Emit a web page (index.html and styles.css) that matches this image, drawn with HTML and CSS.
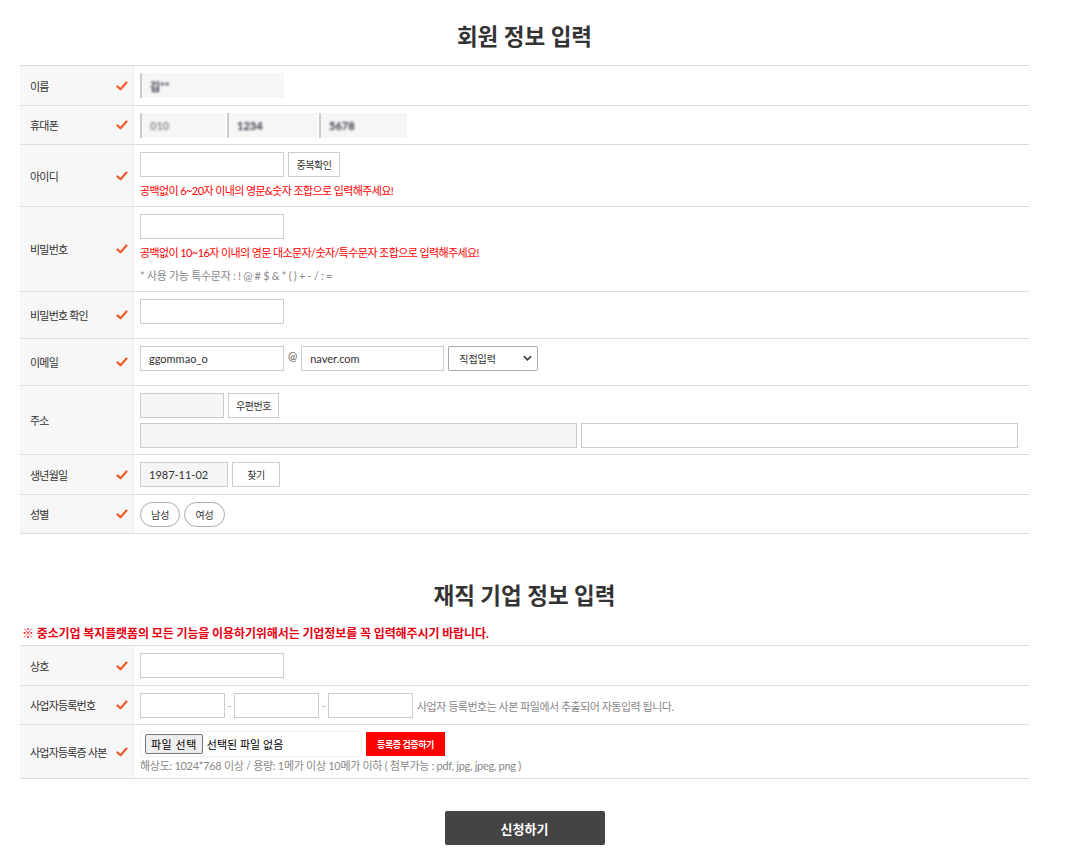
FILE: index.html
```html
<!DOCTYPE html>
<html lang="ko">

<head>
    <meta charset="UTF-8">
    <meta name="viewport" content="width=device-width, initial-scale=1.0">
    <title>회원 정보 입력</title>
    <link rel="stylesheet" href="styles.css">
</head>

<body>
    <div class="wrap">
        <h2 class="sec-title">회원 정보 입력</h2>
        <div class="form-table">
            <div class="row">
                <div class="th">이름<svg class="chk" viewBox="0 0 12 10"><path d="M1.5 5.5 L4.5 8.3 L10.5 1.5"/></svg></div>
                <div class="td line">
                    <span class="blur-box w144"><span class="blur-text dark">김**</span></span>
                </div>
            </div>
            <div class="row">
                <div class="th">휴대폰<svg class="chk" viewBox="0 0 12 10"><path d="M1.5 5.5 L4.5 8.3 L10.5 1.5"/></svg></div>
                <div class="td line phone pb6">
                    <span class="blur-box w85"><span class="blur-text">010</span></span>
                    <span class="blur-box w90"><span class="blur-text dark">1234</span></span>
                    <span class="blur-box w88"><span class="blur-text dark">5678</span></span>
                </div>
            </div>
            <div class="row">
                <div class="th">아이디<svg class="chk" viewBox="0 0 12 10"><path d="M1.5 5.5 L4.5 8.3 L10.5 1.5"/></svg></div>
                <div class="td">
                    <div class="line">
                        <input type="text" class="inp w144">
                        <button type="button" class="btn w52">중복확인</button>
                    </div>
                    <p class="msg red">공백없이 6~20자 이내의 영문&amp;숫자 조합으로 입력해주세요!</p>
                </div>
            </div>
            <div class="row">
                <div class="th">비밀번호<svg class="chk" viewBox="0 0 12 10"><path d="M1.5 5.5 L4.5 8.3 L10.5 1.5"/></svg></div>
                <div class="td">
                    <input type="password" class="inp w144">
                    <p class="msg red">공백없이 10~16자 이내의 영문 대소문자/숫자/특수문자 조합으로 입력해주세요!</p>
                    <p class="msg gray note">* 사용 가능 특수문자 : ! @ # $ &amp; * ( ) + - / : =</p>
                </div>
            </div>
            <div class="row">
                <div class="th">비밀번호 확인<svg class="chk" viewBox="0 0 12 10"><path d="M1.5 5.5 L4.5 8.3 L10.5 1.5"/></svg></div>
                <div class="td pb14">
                    <input type="password" class="inp w144">
                </div>
            </div>
            <div class="row">
                <div class="th">이메일<svg class="chk" viewBox="0 0 12 10"><path d="M1.5 5.5 L4.5 8.3 L10.5 1.5"/></svg></div>
                <div class="td pb14">
                    <div class="line">
                        <input type="text" class="inp w144" value="ggommao_o">
                        <span class="at">@</span>
                        <input type="text" class="inp w143" value="naver.com">
                        <span class="sel-wrap">
                            <select class="sel">
                                <option>직접입력</option>
                                <option>naver.com</option>
                                <option>gmail.com</option>
                            </select>
                            <svg class="sel-arrow" viewBox="0 0 10 6"><path d="M1 1 L5 5 L9 1"/></svg>
                        </span>
                    </div>
                </div>
            </div>
            <div class="row">
                <div class="th">주소</div>
                <div class="td pb6">
                    <div class="line">
                        <input type="text" class="inp w84 ro" readonly>
                        <button type="button" class="btn w51">우편번호</button>
                    </div>
                    <div class="line mt5">
                        <input type="text" class="inp w437 ro" readonly>
                        <input type="text" class="inp w437">
                    </div>
                </div>
            </div>
            <div class="row">
                <div class="th">생년월일<svg class="chk" viewBox="0 0 12 10"><path d="M1.5 5.5 L4.5 8.3 L10.5 1.5"/></svg></div>
                <div class="td">
                    <div class="line">
                        <input type="text" class="inp w88 ro" value="1987-11-02" readonly>
                        <button type="button" class="btn w48">찾기</button>
                    </div>
                </div>
            </div>
            <div class="row">
                <div class="th">성별<svg class="chk" viewBox="0 0 12 10"><path d="M1.5 5.5 L4.5 8.3 L10.5 1.5"/></svg></div>
                <div class="td pb6">
                    <div class="line">
                        <button type="button" class="pill">남성</button>
                        <button type="button" class="pill">여성</button>
                    </div>
                </div>
            </div>
        </div>

        <h2 class="sec-title second">재직 기업 정보 입력</h2>
        <p class="notice">※ 중소기업 복지플랫폼의 모든 기능을 이용하기위해서는 기업정보를 꼭 입력해주시기 바랍니다.</p>
        <div class="form-table">
            <div class="row">
                <div class="th">상호<svg class="chk" viewBox="0 0 12 10"><path d="M1.5 5.5 L4.5 8.3 L10.5 1.5"/></svg></div>
                <div class="td">
                    <input type="text" class="inp w144">
                </div>
            </div>
            <div class="row">
                <div class="th">사업자등록번호<svg class="chk" viewBox="0 0 12 10"><path d="M1.5 5.5 L4.5 8.3 L10.5 1.5"/></svg></div>
                <div class="td pb6">
                    <div class="line biz">
                        <input type="text" class="inp w85">
                        <span class="dash">-</span>
                        <input type="text" class="inp w85">
                        <span class="dash">-</span>
                        <input type="text" class="inp w85">
                        <span class="help">사업자 등록번호는 사본 파일에서 추출되어 자동입력 됩니다.</span>
                    </div>
                </div>
            </div>
            <div class="row">
                <div class="th">사업자등록증 사본<svg class="chk" viewBox="0 0 12 10"><path d="M1.5 5.5 L4.5 8.3 L10.5 1.5"/></svg></div>
                <div class="td file-cell">
                    <div class="line">
                        <label class="file-box">
                            <span class="file-btn">파일 선택</span>
                            <span class="file-name">선택된 파일 없음</span>
                        </label>
                        <button type="button" class="btn-red">등록증 검증하기</button>
                    </div>
                    <p class="msg gray tight">해상도: 1024*768 이상 / 용량: 1메가 이상 10메가 이하 ( 첨부가능 : pdf, jpg, jpeg, png )</p>
                </div>
            </div>
        </div>

        <div class="submit-area">
            <button type="button" class="btn-submit">신청하기</button>
        </div>
    </div>
</body>

</html>
```

FILE: styles.css
```css
body {
    margin: 0;
    font-family: Lato, "Noto Sans CJK KR", sans-serif;
    background: #fff;
    color: #333;
}

.wrap {
    width: 1009px;
    margin-left: 20px;
}

.sec-title {
    margin: 0;
    padding: 22px 0 13px;
    font-size: 22.5px;
    line-height: 30px;
    font-weight: 700;
    color: #333;
    text-align: center;
}

.sec-title.second {
    padding: 47px 0 0;
}

.notice {
    margin: 15px 0 3px 2px;
    font-size: 12px;
    line-height: 16px;
    font-weight: 700;
    color: #e60012;
    letter-spacing: -0.1px;
}

.form-table {
    border-top: 1px solid #ddd;
}

.row {
    display: flex;
    border-bottom: 1px solid #ddd;
}

.th {
    width: 114px;
    flex-shrink: 0;
    display: flex;
    align-items: center;
    justify-content: space-between;
    padding: 0 5px 0 10px;
    box-sizing: border-box;
    background: #f7f7f7;
    border-right: 1px solid #eee;
    font-size: 11px;
    letter-spacing: -0.8px;
    color: #333;
}

.chk {
    width: 12px;
    height: 10px;
    fill: none;
    stroke: #f05a24;
    stroke-width: 2.2;
    stroke-linecap: round;
    stroke-linejoin: round;
}

.td {
    flex: 1;
    padding: 7px 6px;
}

.td.pb14 {
    padding-bottom: 14px;
}

.td.pb6 {
    padding-bottom: 6px;
}

.td.file-cell {
    padding-top: 6px;
    padding-bottom: 4px;
}

.line {
    display: flex;
    align-items: center;
    gap: 4px;
}

.line.phone {
    gap: 2px;
}

.line.biz {
    gap: 2px;
}

.mt5 {
    margin-top: 5px;
}

.inp {
    height: 25px;
    box-sizing: border-box;
    border: 1px solid #ccc;
    padding: 0 8px;
    margin: 0;
    font-family: Lato, "Noto Sans CJK KR", sans-serif;
    font-size: 11px;
    color: #333;
    background: #fff;
    outline: none;
    display: block;
}

.inp.ro {
    background: #f5f5f5;
}

.w84 { width: 84px; }
.w85 { width: 85px; }
.w88 { width: 88px; }
.w90 { width: 90px; }
.w143 { width: 143px; }
.w144 { width: 144px; }
.w437 { width: 437px; }
.w48 { width: 48px; }
.w51 { width: 51px; }
.w52 { width: 52px; }

.btn {
    height: 25px;
    box-sizing: border-box;
    border: 1px solid #ccc;
    background: #fff;
    padding: 0;
    font-family: Lato, "Noto Sans CJK KR", sans-serif;
    font-size: 10px;
    letter-spacing: -0.5px;
    color: #333;
    cursor: pointer;
}

.blur-box {
    display: inline-flex;
    align-items: center;
    height: 25px;
    box-sizing: border-box;
    background: #f6f6f6;
    border-left: 2px solid #ccc;
    padding-left: 8px;
}

.blur-text {
    font-size: 11px;
    font-weight: 700;
    color: #888;
    filter: blur(1.2px);
}

.blur-text.dark {
    color: #334;
}

.msg {
    margin: 6px 0 0;
    font-size: 11px;
    line-height: 16px;
    letter-spacing: -0.6px;
}

.msg.red {
    color: #f00;
}

.msg.gray {
    color: #888;
    letter-spacing: -0.3px;
}

.msg.note {
    margin-top: 7px;
}

.msg.tight {
    margin-top: 1px;
}

.at {
    font-size: 11px;
    color: #555;
    margin-top: -6px;
}

.sel-wrap {
    position: relative;
    display: block;
}

.sel {
    appearance: none;
    width: 90px;
    height: 25px;
    box-sizing: border-box;
    border: 1px solid #aaa;
    border-radius: 2px;
    background: #fff;
    padding: 0 0 0 10px;
    font-family: Lato, "Noto Sans CJK KR", sans-serif;
    font-size: 10px;
    color: #333;
    display: block;
}

.sel-arrow {
    position: absolute;
    right: 6px;
    top: 9px;
    width: 9px;
    height: 6px;
    fill: none;
    stroke: #333;
    stroke-width: 1.8;
    pointer-events: none;
}

.pill {
    height: 25px;
    padding: 0 10px;
    border: 1px solid #aaa;
    border-radius: 13px;
    background: #fff;
    font-family: Lato, "Noto Sans CJK KR", sans-serif;
    font-size: 10px;
    color: #333;
    cursor: pointer;
}

.dash {
    width: 5px;
    text-align: center;
    font-size: 11px;
    color: #aaa;
}

.help {
    margin-left: 2px;
    font-size: 11px;
    color: #888;
    letter-spacing: -0.5px;
}

.file-box {
    display: flex;
    align-items: center;
    gap: 4px;
    width: 222px;
    height: 26px;
    box-sizing: border-box;
    border: 1px solid #eee;
    padding-left: 4px;
    cursor: pointer;
}

.file-btn {
    display: inline-flex;
    align-items: center;
    height: 18px;
    padding: 0 5px;
    border: 1px solid #767676;
    border-radius: 2px;
    background: #efefef;
    font-size: 11px;
    letter-spacing: 0.5px;
    color: #000;
}

.file-name {
    font-size: 11px;
    color: #000;
}

.btn-red {
    height: 24px;
    width: 79px;
    border: none;
    background: #f00;
    color: #fff;
    font-family: Lato, "Noto Sans CJK KR", sans-serif;
    font-size: 9px;
    font-weight: 700;
    letter-spacing: -0.4px;
    padding: 0;
    cursor: pointer;
}

.submit-area {
    display: flex;
    justify-content: center;
    padding-top: 32px;
}

.btn-submit {
    width: 160px;
    height: 34px;
    border: none;
    border-radius: 2px;
    background: #444;
    color: #fff;
    font-family: Lato, "Noto Sans CJK KR", sans-serif;
    font-size: 13px;
    font-weight: 700;
    cursor: pointer;
}

.btn-submit:hover {
    background: #333;
}
```
